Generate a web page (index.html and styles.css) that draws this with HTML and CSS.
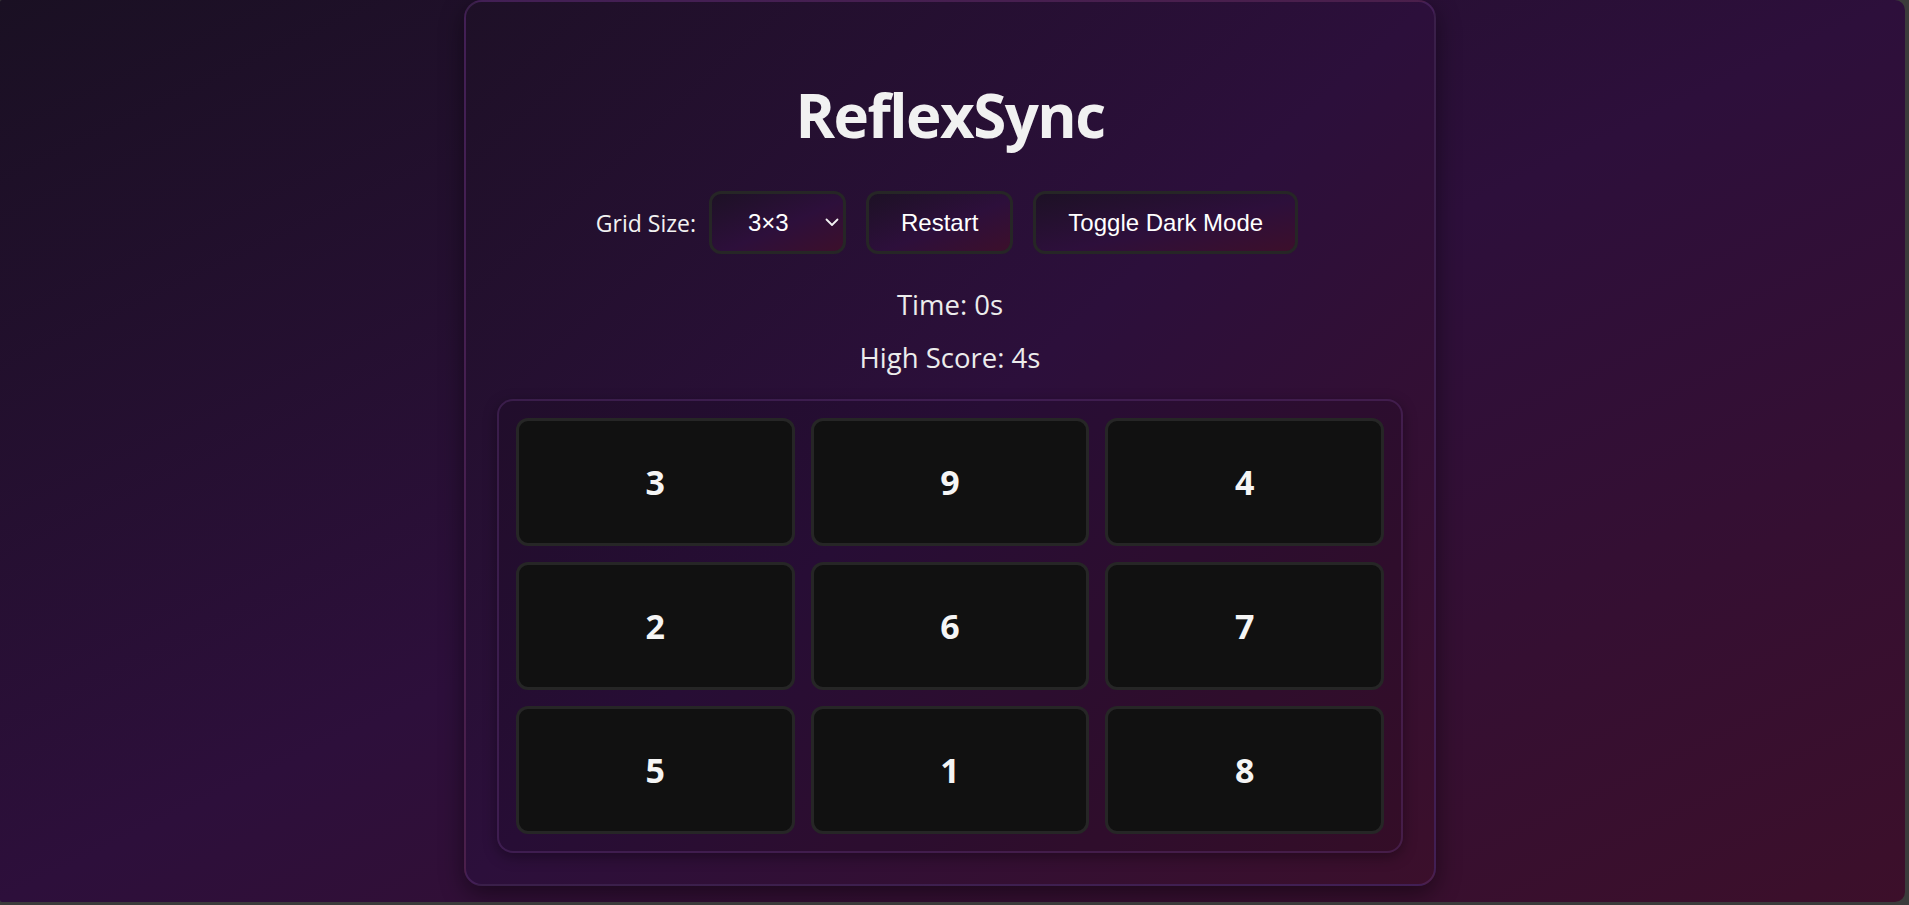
FILE: index.html
```html
<!DOCTYPE html>
<html lang="en">
<head>
<meta charset="utf-8">
<title>ReflexSync</title>
<link rel="stylesheet" href="styles.css">
</head>
<body>
<div class="screen">
  <main class="card">
    <h1 class="title">ReflexSync</h1>
    <div class="controls">
      <label class="label" for="size">Grid Size:</label>
      <span class="select-wrap">
        <select id="size" class="select">
          <option>3×3</option>
          <option>4×4</option>
          <option>5×5</option>
        </select>
        <svg class="chevron" width="14" height="9" viewBox="0 0 14 9" aria-hidden="true"><path d="M1.5 1.5 L7 7 L12.5 1.5" fill="none" stroke="#f2f2f2" stroke-width="1.8" stroke-linecap="round" stroke-linejoin="round"/></svg>
      </span>
      <button class="btn">Restart</button>
      <button class="btn btn-last">Toggle Dark Mode</button>
    </div>
    <p class="stat stat-time">Time: 0s</p>
    <p class="stat stat-high">High Score: 4s</p>
    <div class="board">
      <div class="tile">3</div>
      <div class="tile">9</div>
      <div class="tile">4</div>
      <div class="tile">2</div>
      <div class="tile">6</div>
      <div class="tile">7</div>
      <div class="tile">5</div>
      <div class="tile">1</div>
      <div class="tile">8</div>
    </div>
  </main>
</div>
</body>
</html>
```
FILE: styles.css
```css
* { box-sizing: border-box; }

html {
  margin: 0;
  background: #3b3b3b;
  height: 100%;
}

body {
  margin: 0;
  height: 100%;
  overflow: hidden;
  font-family: "Open Sans", "Noto Sans", sans-serif;
  color: #f0f0f0;
}

.screen {
  width: 1905px;
  height: 902px;
  padding-right: 5px;
  border-radius: 2px 10px 10px 2px;
  background: linear-gradient(to bottom right, #1a1023 0%, #2d0f3b 50%, #3c0f2a 100%);
  display: flex;
  justify-content: center;
  align-items: flex-start;
  overflow: hidden;
}

.card {
  width: 972px;
  border: 2px solid rgba(100, 55, 125, 0.4);
  border-radius: 18px;
  padding: 31px;
  background: linear-gradient(to bottom right, #1e1027 0%, #2c0f3b 50%, #3b0f2b 100%);
  box-shadow: 0 8px 24px rgba(0, 0, 0, 0.45);
  display: flex;
  flex-direction: column;
  align-items: stretch;
}

.title {
  margin: 42px 0 36px;
  font-size: 60px;
  line-height: 80px;
  font-weight: 700;
  letter-spacing: -1.5px;
  text-align: center;
  color: #f1f1f1;
}

.controls {
  display: flex;
  justify-content: center;
  align-items: center;
  height: 63px;
}

.label {
  font-size: 23px;
  color: #f2f2f2;
  margin-right: 2px;
}

.select-wrap {
  position: relative;
  display: inline-flex;
  margin: 0 10px 0 11px;
}

.select,
.btn {
  height: 63px;
  border: 3px solid #262626;
  border-radius: 12px;
  background: linear-gradient(to bottom right, #1d1125 0%, #2d0f3b 55%, #3c0f2b 100%);
  color: #ffffff;
  font-family: "Liberation Sans", Arial, sans-serif;
  font-size: 24px;
}

.select {
  -webkit-appearance: none;
  appearance: none;
  width: 137px;
  padding: 0 30px 0 36px;
  outline: none;
}

.chevron {
  position: absolute;
  right: 7px;
  top: 27px;
  pointer-events: none;
}

.btn {
  margin: 0 10px;
  padding: 0 32px;
  cursor: pointer;
}

.btn-last { margin-right: 6px; }

.stat {
  margin: 0;
  text-align: center;
  font-size: 27.5px;
  line-height: 37px;
  color: #ececec;
}

.stat-time { margin-top: 32px; }
.stat-high { margin-top: 16px; }

.board {
  margin-top: 23px;
  border: 2px solid rgba(100, 55, 125, 0.38);
  border-radius: 16px;
  padding: 17px;
  background: rgba(0, 0, 0, 0.1);
  box-shadow: 0 4px 14px rgba(0, 0, 0, 0.35);
  display: grid;
  grid-template-columns: repeat(3, 1fr);
  grid-auto-rows: 128px;
  gap: 16px;
}

.tile {
  background: #111111;
  border: 3px solid #262626;
  border-radius: 12px;
  display: flex;
  align-items: center;
  justify-content: center;
  font-size: 34px;
  font-weight: 700;
  color: #f5f5f5;
}
```
